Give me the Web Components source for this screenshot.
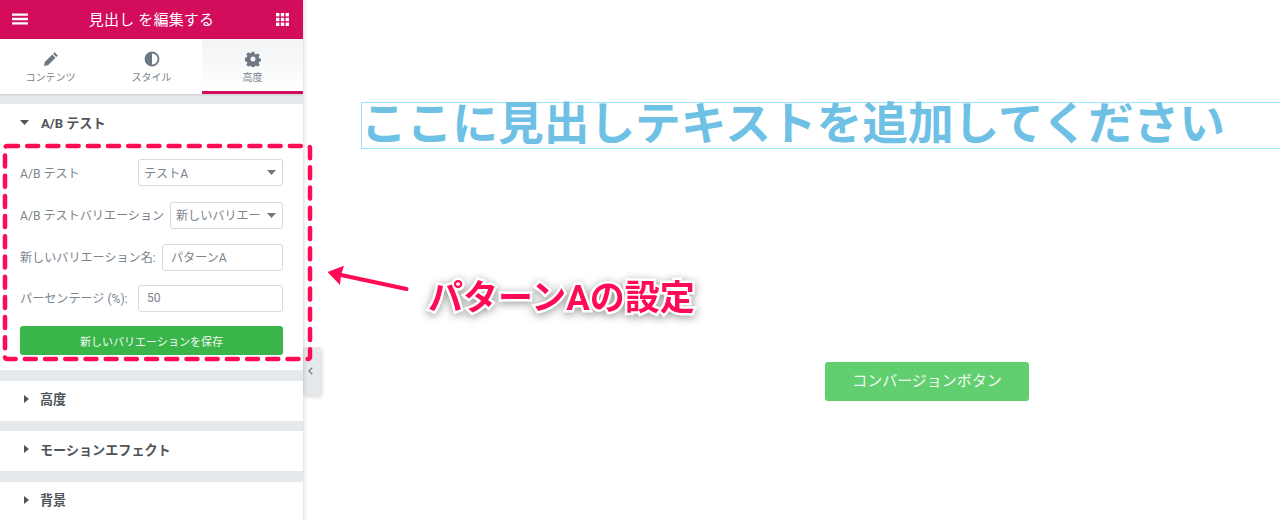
<!DOCTYPE html>
<html lang="ja">
<head>
<meta charset="utf-8">
<style>
html, body { margin: 0; height: 100%; background: #fff; overflow: hidden; }
body { display: flex; font-family: Roboto, "Noto Sans CJK JP", sans-serif; position: relative; }
</style>
</head>
<body>
<editor-panel>
  <panel-header title-text="見出し を編集する"></panel-header>
  <panel-tabs></panel-tabs>
  <panel-section open label="A/B テスト">
    <form-row label="A/B テスト" kind="select" value="テストA" width="145"></form-row>
    <form-row label="A/B テストバリエーション" kind="select" value="新しいバリエー" width="113"></form-row>
    <form-row label="新しいバリエーション名:" kind="input" value="パターンA" width="121"></form-row>
    <form-row label="パーセンテージ (%):" kind="input" value="50" width="145"></form-row>
    <save-button>新しいバリエーションを保存</save-button>
  </panel-section>
  <panel-section label="高度"></panel-section>
  <panel-section label="モーションエフェクト"></panel-section>
  <panel-section label="背景"></panel-section>
</editor-panel>
<preview-canvas></preview-canvas>
<callout-layer></callout-layer>

<script>
(function() {
  'use strict';
  const JP = 'Roboto, "Noto Sans CJK JP", sans-serif';

  function define(name, css, html) {
    customElements.define(name, class extends HTMLElement {
      constructor() {
        super();
        this.attachShadow({mode: 'open'});
      }
      connectedCallback() {
        const attr = (k, d) => this.hasAttribute(k) ? this.getAttribute(k) : d;
        this.shadowRoot.innerHTML = `<style>${css}</style>${typeof html === 'function' ? html(attr) : html}`;
      }
    });
  }

  define('editor-panel', `
    :host { display: block; width: 303px; height: 521px; flex: none; background: #e6e9ec; overflow: hidden;
      box-shadow: 0 0 5px rgba(0,0,0,.22); position: relative; z-index: 2; font-family: ${JP}; }
  `, `<slot></slot>`);

  define('panel-header', `
    :host { display: flex; align-items: center; justify-content: space-between; height: 39px; padding: 0 14px 0 12px;
      background: #d30c5c; color: #fff; box-sizing: border-box; }
    span { font-size: 15px; letter-spacing: .2px; margin: -2px 0 0 -1px; }
    svg { display: block; fill: #fff; margin-top: -1px; }
  `, a => `
    <svg width="16" height="12" viewBox="0 0 16 12"><rect width="16" height="2.4" y=".4" rx=".6"/><rect width="16" height="2.4" y="4.8" rx=".6"/><rect width="16" height="2.4" y="9.2" rx=".6"/></svg>
    <span>${a('title-text', '')}</span>
    <svg width="13" height="13" viewBox="0 0 13 13"><rect width="3.4" height="3.4"/><rect x="4.8" width="3.4" height="3.4"/><rect x="9.6" width="3.4" height="3.4"/><rect y="4.8" width="3.4" height="3.4"/><rect x="4.8" y="4.8" width="3.4" height="3.4"/><rect x="9.6" y="4.8" width="3.4" height="3.4"/><rect y="9.6" width="3.4" height="3.4"/><rect x="4.8" y="9.6" width="3.4" height="3.4"/><rect x="9.6" y="9.6" width="3.4" height="3.4"/></svg>
  `);

  define('panel-tabs', `
    :host { display: grid; grid-template-columns: 101px 101px 101px; height: 55px; background: #fff; margin-bottom: 10px;
      box-shadow: 0 1px 2px rgba(0,0,0,.12); position: relative; }
    div { display: flex; flex-direction: column; align-items: center; box-sizing: border-box; padding-top: 12px; color: #7a848d; font-size: 10px; line-height: 14px; }
    svg { display: block; width: 16px; height: 16px; fill: #6d7882; margin-bottom: 4px; }
    .on { background: linear-gradient(#f1f3f5, #fff); border-bottom: 3px solid #d30c5c; }
  `, `
    <div><svg viewBox="0 0 16 16"><path d="M11.6 1.2 14.8 4.4 13.3 5.9 10.1 2.7ZM9.3 3.5 12.5 6.7 5 14.2 1 15 1.8 11Z"/></svg>コンテンツ</div>
    <div><svg viewBox="0 0 16 16"><path fill-rule="evenodd" d="M8 .6a7.4 7.4 0 1 0 0 14.8A7.4 7.4 0 0 0 8 .6Zm0 1.8v11.2a5.6 5.6 0 0 0 0-11.2Z"/></svg>スタイル</div>
    <div class="on"><svg viewBox="0 0 16 16"><path fill-rule="evenodd" d="M6.7.8h2.6l.4 2 1.3.6 1.8-1.1 1.9 1.9-1.1 1.8.6 1.3 2 .4v2.6l-2 .4-.6 1.3 1.1 1.8-1.9 1.9-1.8-1.1-1.3.6-.4 2H6.7l-.4-2-1.3-.6-1.8 1.1-1.9-1.9 1.1-1.8-.6-1.3-2-.4V6.7l2-.4.6-1.3-1.1-1.8 1.9-1.9 1.8 1.1 1.3-.6ZM8 5.5a2.5 2.5 0 1 0 0 5 2.5 2.5 0 0 0 0-5Z"/></svg>高度</div>
  `);

  define('panel-section', `
    :host { display: block; background: #fff; margin-bottom: 10.5px; }
    .head { display: flex; align-items: center; height: 40px; padding: 0 0 4px 20px; box-sizing: border-box; color: #4f5458; font-size: 13.1px; font-weight: 700; }
    .arrow { width: 15px; display: flex; margin-right: 6px; }
    .arrow svg { display: block; fill: #4f5458; }
    .arrow.right { padding-left: 4px; width: 10px; }
    .body { padding: 17px 20px 15px; display: flex; flex-direction: column; }
    :host([open]) .head { height: 38px; padding-bottom: 2px; }
  `, a => {
    const open = a('open', null) !== null;
    return `
    <div class="head">
      <span class="arrow ${open ? '' : 'right'}">${open
        ? '<svg width="9" height="5" viewBox="0 0 9 5"><path d="M0 0H9L4.5 5Z"/></svg>'
        : '<svg width="5" height="8" viewBox="0 0 5 8"><path d="M0 0 5 4 0 8Z"/></svg>'}</span>
      ${a('label', '')}
    </div>
    ${open ? '<div class="body"><slot></slot></div>' : ''}`;
  });

  define('form-row', `
    :host { display: flex; align-items: center; justify-content: space-between; height: 27px; margin-bottom: 14px; color: #7a848d; font-size: 12.1px; white-space: nowrap; }
    :host([kind=select]) { margin-bottom: 15.5px; }
    :host([kind=select]) label, :host([kind=select]) .txt { margin-top: -1px; }
    :host([kind=input]) label, :host([kind=input]) .txt { margin-top: -2px; }
    label { display: block; }
    .box { box-sizing: border-box; height: 27px; border: 1px solid #d5dadf; border-radius: 3px; background: #fff; padding: 0 6px 0 5px; display: flex; align-items: center; color: #7a848d; }
    .box.input { padding-left: 8px; }
    .txt { flex: 1; }
    svg { flex: none; fill: #6d7882; }
  `, a => {
    const sel = a('kind') === 'select';
    return `<label>${a('label', '')}</label>
    <div class="box ${a('kind')}" style="width:${a('width')}px"><span class="txt">${a('value', '')}</span>${sel ? '<svg width="9" height="5" viewBox="0 0 9 5"><path d="M0 0H9L4.5 5Z"/></svg>' : ''}</div>`;
  });

  define('save-button', `
    :host { display: flex; align-items: center; justify-content: center; height: 29px; background: #39b54a; border-radius: 3px; color: #f4fbf5; font-size: 11px; }
  `, `<slot></slot>`);

  define('preview-canvas', `
    :host { display: block; flex: 1; min-width: 0; position: relative; padding: 102px 0 0 58px; box-sizing: border-box; font-family: ${JP}; }
    h2 { margin: 0; height: 47px; box-sizing: border-box; border: 1.5px solid #9be4fd; border-right: 0; color: #6ec1e4; font-size: 45.7px; font-weight: 700; line-height: 44px; text-indent: -1px; white-space: nowrap; }
    a { display: flex; align-items: center; justify-content: center; width: 204px; height: 39px; padding-bottom: 4px; box-sizing: border-box; margin: 213px 0 0 464px; background: #61ce70; border-radius: 3px; color: #f2fbf3; font-size: 15px; }
    .toggle { position: absolute; left: 0; top: 347px; width: 17px; height: 48px; padding-right: 2px; box-sizing: border-box; background: #e6e9ec; box-shadow: 2px 2px 4px rgba(0,0,0,.15); display: flex; align-items: center; justify-content: center; }
    .toggle svg { display: block; fill: none; stroke: #6d7882; stroke-width: 1.3; }
  `, `
    <div class="toggle"><svg width="5" height="8" viewBox="0 0 5 8"><path d="M4.3.6 1 4 4.3 7.4"/></svg></div>
    <h2>ここに見出しテキストを追加してください</h2>
    <a>コンバージョンボタン</a>
  `);

  define('callout-layer', `
    :host { display: block; position: absolute; inset: 0; pointer-events: none; z-index: 5; font-family: ${JP}; }
    svg { position: absolute; left: 0; top: 0; }
    b { position: absolute; left: 428px; top: 277px; color: #ff0a54; font-size: 35px; line-height: 44px; font-weight: 700; white-space: nowrap;
      -webkit-text-stroke: 5px #fff; paint-order: stroke fill; filter: drop-shadow(0 2px 4px rgba(0,0,0,.4)); }
  `, `
    <svg width="1280" height="521" viewBox="0 0 1280 521">
      <rect x="5" y="146" width="305" height="213" rx="2" fill="none" stroke="#ff0a54" stroke-width="4.5" stroke-linecap="round" stroke-dasharray="11 9.2"/>
      <path d="M406.5 289 341 275" fill="none" stroke="#ff0a54" stroke-width="4" stroke-linecap="round"/>
      <path d="M327.5 272 344 265.7 341 275 340 285Z" fill="#ff0a54"/>
    </svg>
    <b>パターンAの設定</b>
  `);
}());
</script>
</body>
</html>
